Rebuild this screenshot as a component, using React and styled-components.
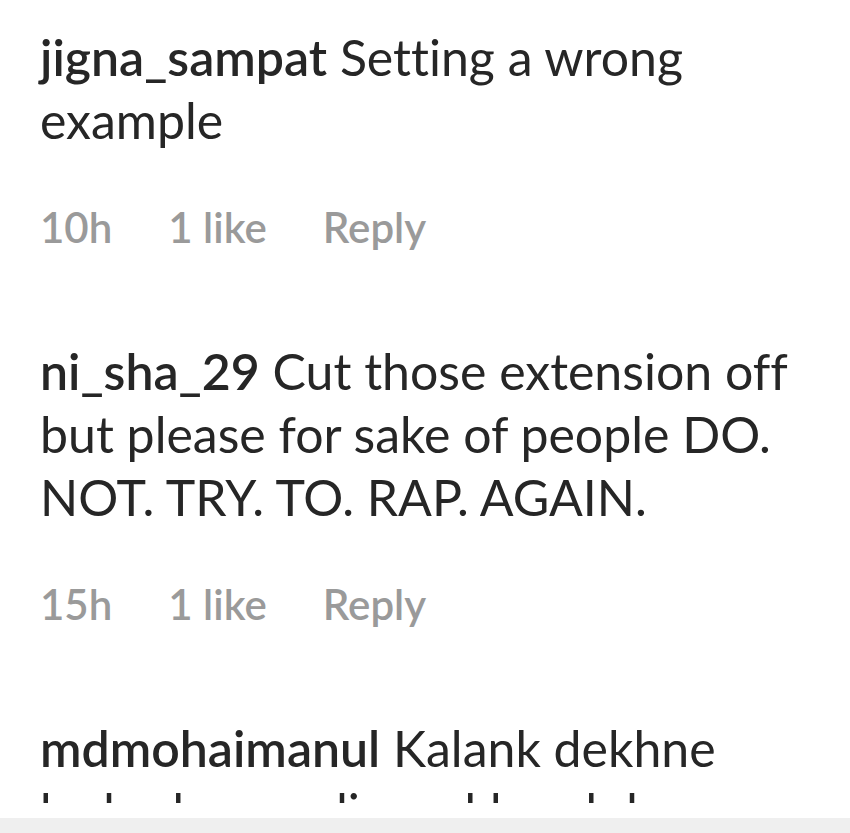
import styled, { createGlobalStyle } from "styled-components"

const GlobalStyle = createGlobalStyle`
  html, body {
    margin: 0;
    padding: 0;
    background: #ffffff;
  }
  body {
    font-family: Lato, "Open Sans", sans-serif;
    font-variant-ligatures: none;
    color: #262626;
  }
`

const COMMENTS = [
  { user: 'jigna_sampat', text: 'Setting a wrong example', time: '10h', likes: '1 like' },
  { user: 'ni_sha_29', text: 'Cut those extension off but please for sake of people DO. NOT. TRY. TO. RAP. AGAIN.', time: '15h', likes: '1 like' },
  { user: 'mdmohaimanul', text: 'Kalank dekhne ke\u00a0bad mera dimag kharab ho gaya', time: '16h', likes: '2 likes' }
]

const App = () => {
  return (
    <Panel>
      <GlobalStyle />
      <Scroller>
        <List>
          {COMMENTS.map(c => (
            <Comment key={c.user}>
              <Body>
                <User>{c.user}</User> {c.text}
              </Body>
              <Meta>
                <MetaItem>{c.time}</MetaItem>
                <MetaItem>{c.likes}</MetaItem>
                <MetaItem as="button">Reply</MetaItem>
              </Meta>
            </Comment>
          ))}
        </List>
      </Scroller>
      <Footer />
    </Panel>
  )
}

const Panel = styled.div`
  display: flex;
  flex-direction: column;
  height: 833px;
  width: 850px;
`

const Scroller = styled.div`
  flex: 1;
  overflow: hidden;
`

const List = styled.ul`
  list-style: none;
  margin: 0;
  padding: 26px 55px 0 40px;
`

const Comment = styled.li`
  margin-bottom: 88px;
`

const Body = styled.div`
  font-size: 50px;
  line-height: 63px;
  font-weight: 400;
  color: #262626;
`

const User = styled.span`
  font-weight: 600;
`

const Meta = styled.div`
  display: flex;
  gap: 56px;
  margin-top: 50px;
  font-size: 42px;
  line-height: 50px;
  font-weight: 600;
  color: #9a9a9a;
`

const MetaItem = styled.span`
  font: inherit;
  color: inherit;
  background: none;
  border: 0;
  padding: 0;
`

const Footer = styled.div`
  flex: none;
  margin-top: 15px;
  height: 15px;
  background: #efefef;
`

export default App
